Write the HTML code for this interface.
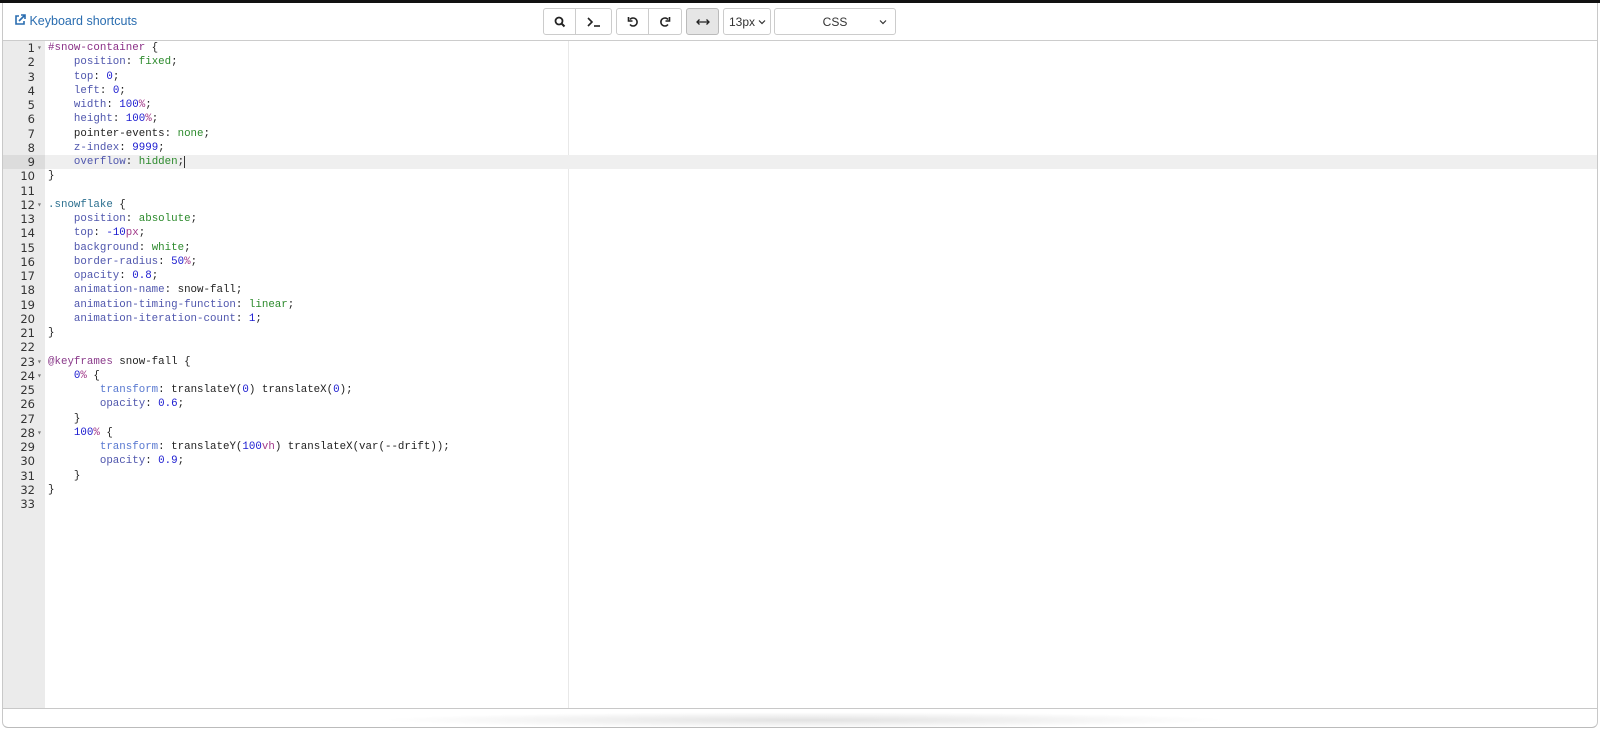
<!DOCTYPE html>
<html><head><style>
*{margin:0;padding:0;box-sizing:border-box}
body{width:1600px;height:730px;background:#fff;position:relative;overflow:hidden;font-family:"Liberation Sans",sans-serif}
.top{position:absolute;left:0;top:0;width:1600px;height:3px;background:#111}
.win{position:absolute;left:2px;top:3px;width:1596px;height:725px;border-left:1px solid #c8c8c8;border-right:1px solid #c8c8c8;border-bottom:1px solid #bbb;border-radius:0 0 6px 6px}
.ks{position:absolute;left:14px;top:14px;font-size:12.5px;color:#2a6db0}
.btn{position:absolute;top:8px;height:27px;border:1px solid #ccc;background:#fff;display:flex;align-items:center;justify-content:center;font-size:12px;color:#333}
.tb{position:absolute;left:3px;top:40px;width:1594px;height:1px;background:#ccc}
.gut{position:absolute;left:3px;top:41px;width:42px;height:667px;background:#ebebeb}
.pm{position:absolute;left:568px;top:41px;width:1px;height:667px;background:#e8e8e8}
.act{position:absolute;left:45px;width:1552px;height:14.25px;background:#efefef}
.actg{position:absolute;left:3px;width:42px;height:14.25px;background:#dcdcdc}
.code{position:absolute;left:0;top:41px;font-family:"Liberation Mono",monospace;font-size:10.8px}
.l{height:14.25px;line-height:14.25px;white-space:pre;position:relative}
.n{position:absolute;left:0;width:35px;text-align:right;color:#333;font-family:"DejaVu Sans",sans-serif;font-size:11.5px}
.f{position:absolute;left:37px;color:#777;font-size:8px;top:1px}
.t{position:absolute;left:48px;color:#222}
.p{color:#4f56ad}.v{color:#2c8a2c}.d{color:#1a1ad0}.u{color:#a23a8a}.s{color:#8a2f86}.c{color:#2b6f8f}.k{color:#8a3a8a}.tr{color:#5878d0}
.bb{position:absolute;left:3px;top:708px;width:1594px;height:1px;background:#c8c8c8}
.sh{position:absolute;left:380px;top:712px;width:850px;height:16px;background:radial-gradient(ellipse at center,#e2e2e2,rgba(255,255,255,0) 70%)}
</style></head><body>
<div class="top"></div>
<div class="win"></div>
<div class="ks"><svg width="12" height="12" viewBox="0 0 12 12" style="vertical-align:-1px"><path d="M5 2H2v8h8V7" fill="none" stroke="#2a6db0" stroke-width="1.6"/><path d="M5 7l6-6M7 1h4v4" fill="none" stroke="#2a6db0" stroke-width="1.6"/></svg> Keyboard shortcuts</div>
<div class="btn" style="left:543px;width:33px;border-radius:3px 0 0 3px"><svg width="12" height="12"><circle cx="5" cy="5" r="3.5" fill="none" stroke="#222" stroke-width="1.8"/><path d="M7.5 7.5l3 3" stroke="#222" stroke-width="2"/></svg></div>
<div class="btn" style="left:575px;width:37px;border-radius:0 3px 3px 0"><svg width="16" height="12"><path d="M2 2l4 4-4 4" fill="none" stroke="#222" stroke-width="1.6"/><path d="M8 10h6" stroke="#222" stroke-width="1.6"/></svg></div>
<div class="btn" style="left:616px;width:33px;border-radius:3px 0 0 3px"><svg width="12" height="12"><path d="M3 3.5A4 4 0 1 1 3 8.5" fill="none" stroke="#222" stroke-width="1.6"/><path d="M1.5 1v4h4" fill="none" stroke="#222" stroke-width="1.6"/></svg></div>
<div class="btn" style="left:648px;width:34px;border-radius:0 3px 3px 0"><svg width="12" height="12"><path d="M9 3.5A4 4 0 1 0 9 8.5" fill="none" stroke="#222" stroke-width="1.6"/><path d="M10.5 1v4h-4" fill="none" stroke="#222" stroke-width="1.6"/></svg></div>
<div class="btn" style="left:686px;width:33px;border-radius:3px;background:#e6e6e6;border-color:#bbb"><svg width="14" height="8"><path d="M1 4h12M3.5 1.5L1 4l2.5 2.5M10.5 1.5L13 4l-2.5 2.5" fill="none" stroke="#222" stroke-width="1.3"/></svg></div>
<div class="btn" style="left:723px;width:48px;border-radius:3px;justify-content:flex-start;padding-left:5px">13px <svg width="8" height="6" style="margin-left:3px"><path d="M1 1.5l3 3 3-3" fill="none" stroke="#333" stroke-width="1.2"/></svg></div>
<div class="btn" style="left:774px;width:122px;border-radius:3px">CSS<svg width="8" height="6" style="position:absolute;right:8px;top:10px"><path d="M1 1.5l3 3 3-3" fill="none" stroke="#333" stroke-width="1.2"/></svg></div>
<div class="tb"></div>
<div class="gut"></div>
<div class="pm"></div>
<div class="act" style="top:155px"></div>
<div class="actg" style="top:155px"></div>
<div class="code">
<div class="l"><span class="n">1</span><span class="f">▾</span><span class="t"><span class="s">#snow-container</span> {</span></div>
<div class="l"><span class="n">2</span><span class="t">    <span class="p">position</span>: <span class="v">fixed</span>;</span></div>
<div class="l"><span class="n">3</span><span class="t">    <span class="p">top</span>: <span class="d">0</span>;</span></div>
<div class="l"><span class="n">4</span><span class="t">    <span class="p">left</span>: <span class="d">0</span>;</span></div>
<div class="l"><span class="n">5</span><span class="t">    <span class="p">width</span>: <span class="d">100</span><span class="u">%</span>;</span></div>
<div class="l"><span class="n">6</span><span class="t">    <span class="p">height</span>: <span class="d">100</span><span class="u">%</span>;</span></div>
<div class="l"><span class="n">7</span><span class="t">    pointer-events: <span class="v">none</span>;</span></div>
<div class="l"><span class="n">8</span><span class="t">    <span class="p">z-index</span>: <span class="d">9999</span>;</span></div>
<div class="l"><span class="n">9</span><span class="t">    <span class="p">overflow</span>: <span class="v">hidden</span>;<span style="border-left:1px solid #333"></span></span></div>
<div class="l"><span class="n">10</span><span class="t">}</span></div>
<div class="l"><span class="n">11</span></div>
<div class="l"><span class="n">12</span><span class="f">▾</span><span class="t"><span class="c">.snowflake</span> {</span></div>
<div class="l"><span class="n">13</span><span class="t">    <span class="p">position</span>: <span class="v">absolute</span>;</span></div>
<div class="l"><span class="n">14</span><span class="t">    <span class="p">top</span>: <span class="d">-10</span><span class="u">px</span>;</span></div>
<div class="l"><span class="n">15</span><span class="t">    <span class="p">background</span>: <span class="v">white</span>;</span></div>
<div class="l"><span class="n">16</span><span class="t">    <span class="p">border-radius</span>: <span class="d">50</span><span class="u">%</span>;</span></div>
<div class="l"><span class="n">17</span><span class="t">    <span class="p">opacity</span>: <span class="d">0.8</span>;</span></div>
<div class="l"><span class="n">18</span><span class="t">    <span class="p">animation-name</span>: snow-fall;</span></div>
<div class="l"><span class="n">19</span><span class="t">    <span class="p">animation-timing-function</span>: <span class="v">linear</span>;</span></div>
<div class="l"><span class="n">20</span><span class="t">    <span class="p">animation-iteration-count</span>: <span class="d">1</span>;</span></div>
<div class="l"><span class="n">21</span><span class="t">}</span></div>
<div class="l"><span class="n">22</span></div>
<div class="l"><span class="n">23</span><span class="f">▾</span><span class="t"><span class="k">@keyframes</span> snow-fall {</span></div>
<div class="l"><span class="n">24</span><span class="f">▾</span><span class="t">    <span class="d">0</span><span class="u">%</span> {</span></div>
<div class="l"><span class="n">25</span><span class="t">        <span class="tr">transform</span>: translateY(<span class="d">0</span>) translateX(<span class="d">0</span>);</span></div>
<div class="l"><span class="n">26</span><span class="t">        <span class="p">opacity</span>: <span class="d">0.6</span>;</span></div>
<div class="l"><span class="n">27</span><span class="t">    }</span></div>
<div class="l"><span class="n">28</span><span class="f">▾</span><span class="t">    <span class="d">100</span><span class="u">%</span> {</span></div>
<div class="l"><span class="n">29</span><span class="t">        <span class="tr">transform</span>: translateY(<span class="d">100</span><span class="u">vh</span>) translateX(var(--drift));</span></div>
<div class="l"><span class="n">30</span><span class="t">        <span class="p">opacity</span>: <span class="d">0.9</span>;</span></div>
<div class="l"><span class="n">31</span><span class="t">    }</span></div>
<div class="l"><span class="n">32</span><span class="t">}</span></div>
<div class="l"><span class="n">33</span></div>
</div>
<div class="bb"></div>
<div class="sh"></div>
</body></html>
